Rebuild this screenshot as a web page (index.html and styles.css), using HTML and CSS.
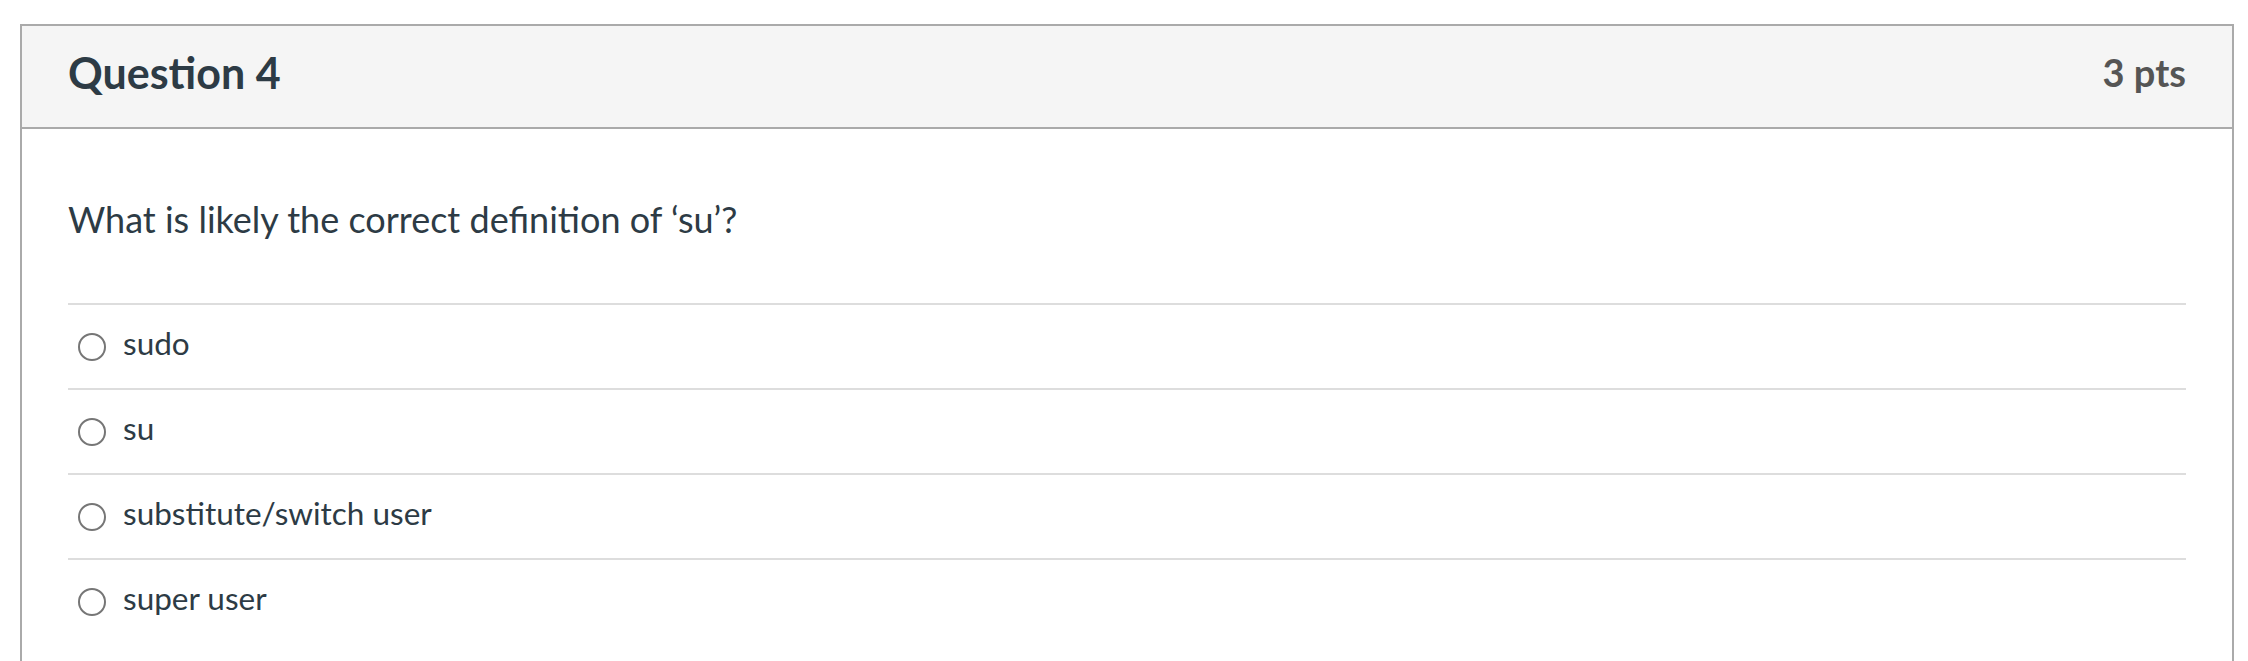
FILE: index.html
```html
<!DOCTYPE html>
<html lang="en">
<head>
<meta charset="utf-8">
<title>Question 4</title>
<link rel="stylesheet" href="styles.css">
</head>
<body>
<div class="page">
  <div class="card">
    <div class="header">
      <span class="title">Question 4</span>
      <span class="pts">3 pts</span>
    </div>
    <div class="body">
      <p class="question">What is likely the correct definition of ‘su’?</p>
      <div class="answers">
        <label class="answer"><span class="radio"></span><span class="atext">sudo</span></label>
        <label class="answer"><span class="radio"></span><span class="atext">su</span></label>
        <label class="answer"><span class="radio"></span><span class="atext">substitute/switch user</span></label>
        <label class="answer"><span class="radio"></span><span class="atext">super user</span></label>
      </div>
    </div>
  </div>
</div>
</body>
</html>
```
FILE: styles.css
```css
html, body {
  margin: 0;
  padding: 0;
  background: #ffffff;
  overflow: hidden;
}
.page {
  padding: 24px 14px 0 20px;
  font-family: Lato, "Liberation Sans", sans-serif;
  color: #2d3b45;
}
.card {
  border: 2px solid #aaaaaa;
  border-bottom: none;
  min-height: 800px;
}
.header {
  height: 92px;
  padding: 0 46px 9px 46px;
  background: #f5f5f5;
  border-bottom: 2px solid #aaaaaa;
  display: flex;
  align-items: center;
  justify-content: space-between;
}
.title {
  font-size: 43px;
  font-weight: 700;
  color: #2d3b45;
}
.pts {
  font-size: 38px;
  font-weight: 700;
  color: #555555;
}
.body {
  padding: 0 46px;
}
.question {
  margin: 69px 0 62px 0;
  font-size: 36px;
  line-height: 1.2;
}
.answers {
  display: flex;
  flex-direction: column;
}
.answer {
  display: flex;
  align-items: center;
  height: 83px;
  border-top: 2px solid #dddddd;
  font-size: 31.5px;
}
.radio {
  width: 24px;
  height: 24px;
  border: 2px solid #767676;
  border-radius: 50%;
  margin-left: 10px;
  margin-right: 17px;
  flex: none;
}
.atext {
  line-height: 1.2;
  padding-bottom: 6px;
}
```
